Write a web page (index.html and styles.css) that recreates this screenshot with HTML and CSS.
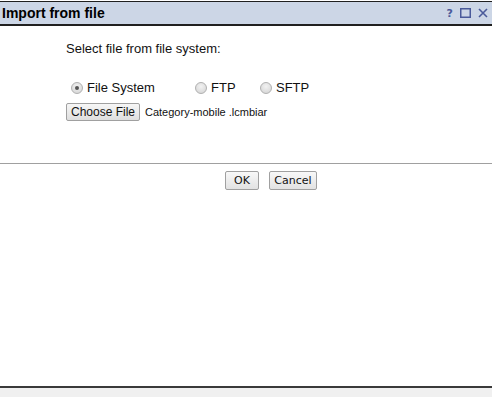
FILE: index.html
```html
<!DOCTYPE html>
<html>
<head>
<meta charset="utf-8">
<link rel="stylesheet" href="styles.css">
</head>
<body>
<div class="dialog">
  <div class="titlebar">
    <span class="title">Import from file</span>
    <span class="tools">
      <span class="tool-help">?</span>
      <svg class="tool-max" width="11" height="10" viewBox="0 0 11 10"><rect x="0.75" y="0.75" width="9.5" height="8.5" fill="none" stroke="#4a5a9a" stroke-width="1.5"/></svg>
      <svg class="tool-close" width="10" height="10" viewBox="0 0 10 10"><path d="M1 1L9 9M9 1L1 9" stroke="#4a5a9a" stroke-width="1.6"/></svg>
    </span>
  </div>
  <div class="content">
    <div class="label">Select file from file system:</div>
    <div class="radios">
      <label class="radio r-fs"><span class="dot checked"></span>File System</label>
      <label class="radio r-ftp"><span class="dot"></span>FTP</label>
      <label class="radio r-sftp"><span class="dot"></span>SFTP</label>
    </div>
    <div class="filerow">
      <span class="btn choose">Choose File</span>
      <span class="filename">Category-mobile .lcmbiar</span>
    </div>
  </div>
  <div class="divider"></div>
  <div class="buttons">
    <span class="btn action ok">OK</span>
    <span class="btn action cancel">Cancel</span>
  </div>
  <div class="spacer"></div>
  <div class="footer"></div>
</div>
</body>
</html>
```
FILE: styles.css
```css
html, body {
  margin: 0;
  padding: 0;
  background: #ffffff;
}
.dialog {
  width: 492px;
  height: 397px;
  display: flex;
  flex-direction: column;
  overflow: hidden;
  font-family: "Liberation Sans", Arial, sans-serif;
}
.titlebar {
  margin-top: 1px;
  height: 22px;
  border-top: 1px solid #202020;
  border-bottom: 2px solid #202020;
  background: #ccd6e6;
  display: flex;
  align-items: center;
  justify-content: space-between;
  padding: 0 4px 0 2px;
}
.title {
  font-family: "Liberation Sans", Arial, sans-serif;
  font-weight: bold;
  font-size: 14px;
  color: #000;
}
.tools {
  display: flex;
  align-items: center;
  gap: 7px;
}
.tool-help {
  font-family: "DejaVu Sans", sans-serif;
  font-size: 11px;
  font-weight: bold;
  color: #4a5a9a;
}
.content {
  padding: 15px 0 0 66px;
  height: 124px;
  box-sizing: border-box;
}
.label {
  font-size: 13px;
  color: #111;
  line-height: 15px;
}
.radios {
  display: flex;
  margin-top: 23px;
  height: 17px;
  align-items: center;
}
.radio {
  display: flex;
  align-items: center;
  font-size: 13px;
  color: #111;
}
.r-fs { width: 124px; margin-left: 5px; }
.r-ftp { width: 65px; }
.dot {
  width: 12px;
  height: 12px;
  border-radius: 50%;
  border: 1px solid #b0b0b0;
  background: radial-gradient(circle at 50% 35%, #f2f2f2, #d2d2d2);
  margin-right: 4px;
  box-sizing: border-box;
  display: inline-flex;
  align-items: center;
  justify-content: center;
}
.dot.checked::after {
  content: "";
  width: 4px;
  height: 4px;
  border-radius: 50%;
  background: #555;
}
.filerow {
  margin-top: 7px;
  display: flex;
  align-items: center;
}
.btn {
  display: inline-flex;
  align-items: center;
  justify-content: center;
  border: 1px solid #a0a0a0;
  border-radius: 2px;
  background: linear-gradient(#f6f6f6, #dedede);
  color: #111;
  box-sizing: border-box;
}
.choose {
  width: 74px;
  height: 18px;
  font-size: 12px;
}
.filename {
  margin-left: 5px;
  font-family: "Liberation Sans", Arial, sans-serif;
  font-size: 11px;
  color: #111;
}
.divider {
  height: 1px;
  background: #a0a0a0;
  margin-top: 13px;
}
.buttons {
  display: flex;
  justify-content: flex-start;
  padding-left: 225px;
  margin-top: 7px;
  gap: 10px;
}
.action {
  height: 19px;
  font-family: "DejaVu Sans", Tahoma, sans-serif;
  font-size: 11px;
  border-color: #a0a0a0;
  background: linear-gradient(#f8f8f8, #e2e2e2);
}
.ok { width: 34px; }
.cancel { width: 48px; }
.spacer { flex: 1; }
.footer {
  height: 9px;
  border-top: 2px solid #3a3a3a;
  background: #f0f0f0;
}
```
